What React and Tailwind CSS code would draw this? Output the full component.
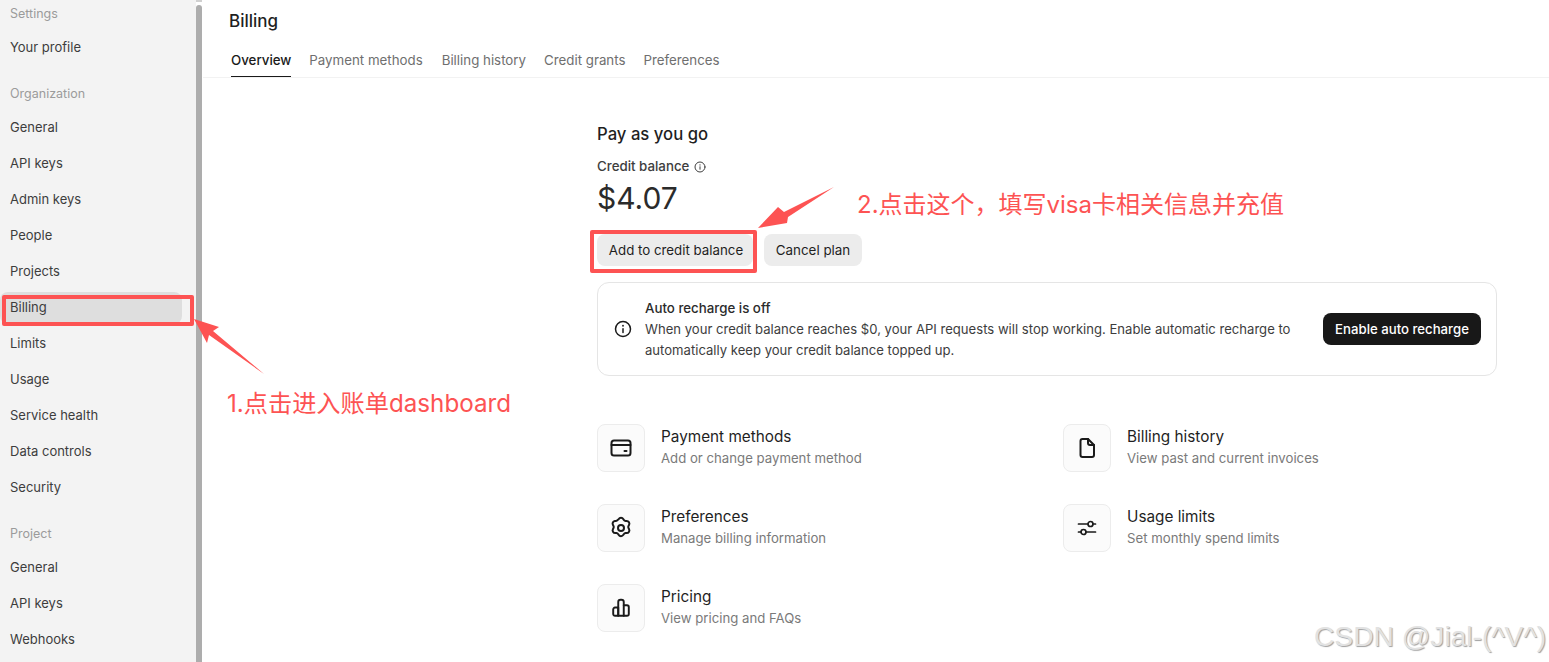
const F = "font-['Inter','Noto_Sans_CJK_SC',sans-serif]";

function NavLabel({ children, className = "" }) {
  return <div className={`h-[26px] flex items-center pl-[10px] text-[12.5px] text-[#9b9b9b] ${className}`}>{children}</div>;
}
function NavItem({ children, active }) {
  return (
    <div className={`h-[32px] mb-[4px] w-[182px] flex items-center pl-[10px] text-[13px] text-[#3d3d3d] rounded-lg ${active ? "bg-[#dedede]" : ""}`}>
      {children}
    </div>
  );
}
function Sidebar() {
  return (
    <aside className="w-[196px] h-[662px] shrink-0 bg-[#f3f3f3] overflow-hidden">
      <div className="h-[1px]" />
      <NavLabel>Settings</NavLabel>
      <div className="h-[2px]" />
      <div className="mt-[3px]"><NavItem>Your profile</NavItem></div>
      <div className="h-[13px]" />
      <NavLabel>Organization</NavLabel>
      <div className="mt-[5px]">
        {["General", "API keys", "Admin keys", "People", "Projects"].map((t) => <NavItem key={t}>{t}</NavItem>)}
        <NavItem active>Billing</NavItem>
        {["Limits", "Usage", "Service health", "Data controls", "Security"].map((t) => <NavItem key={t}>{t}</NavItem>)}
      </div>
      <div className="h-[13px]" />
      <NavLabel>Project</NavLabel>
      <div className="mt-[5px]">
        {["General", "API keys", "Webhooks"].map((t) => <NavItem key={t + "p"}>{t}</NavItem>)}
      </div>
    </aside>
  );
}
function Scrollbar() {
  return (
    <div className="w-[7px] shrink-0 h-[662px] bg-white flex flex-col">
      <div className="w-[6px] h-[2px] bg-[#d0d0d0]" />
      <div className="w-[6px] mt-[3px] flex-1 bg-[#adadad] rounded-t-[3px]" />
    </div>
  );
}
const tabs = [
  ["Overview", "ml-[28px]"],
  ["Payment methods", "ml-[18px]"],
  ["Billing history", "ml-[19px]"],
  ["Credit grants", "ml-[18px]"],
  ["Preferences", "ml-[18px]"],
];
const I = ({ children, size = 24, sw = 2 }) => (
  <svg width={size} height={size} viewBox="0 0 24 24" fill="none" stroke="#1a1a1a" strokeWidth={sw} strokeLinecap="round" strokeLinejoin="round">{children}</svg>
);
const CardIcon = () => (
  <I>
    <rect x="2.5" y="4.5" width="19" height="15" rx="2.5" />
    <path d="M2.5 9h19" />
    <path d="M15.5 15h2" />
  </I>
);
const DocIcon = () => (
  <I>
    <path d="M5.5 5a2 2 0 0 1 2-2h5.5l6 6V19a2 2 0 0 1-2 2H7.5a2 2 0 0 1-2-2z" />
    <path d="M13 3v4a2 2 0 0 0 2 2h4" />
  </I>
);
const GearIcon = () => (
  <I>
    <path d="M9.6 3.2a2.8 2.8 0 0 1 4.8 0l.5.8a2 2 0 0 0 1.7 1l1-.1a2.8 2.8 0 0 1 2.4 4.2l-.5.9a2 2 0 0 0 0 2l.5.9a2.8 2.8 0 0 1-2.4 4.2l-1-.1a2 2 0 0 0-1.7 1l-.5.8a2.8 2.8 0 0 1-4.8 0l-.5-.8a2 2 0 0 0-1.7-1l-1 .1a2.8 2.8 0 0 1-2.4-4.2l.5-.9a2 2 0 0 0 0-2l-.5-.9A2.8 2.8 0 0 1 5.9 4.9l1 .1a2 2 0 0 0 1.7-1z" />
    <circle cx="12" cy="12" r="3" />
  </I>
);
const SliderIcon = () => (
  <I sw={1.7}>
    <path d="M3.5 8h9.5M18 8h2.5" />
    <circle cx="15.5" cy="8" r="2.5" />
    <path d="M3.5 16h2.5M11 16h9.5" />
    <circle cx="8.5" cy="16" r="2.5" />
  </I>
);
const BarsIcon = () => (
  <I size={22} sw={2.1}>
    <path d="M3.5 18.5v-5A2 2 0 0 1 5.5 11.5H9V20.5H5.5a2 2 0 0 1-2-2z" />
    <path d="M9 20.5V5.5A2.5 2.5 0 0 1 11.5 3h1A2.5 2.5 0 0 1 15 5.5V20.5z" />
    <path d="M15 9h3.5a2 2 0 0 1 2 2v7.5a2 2 0 0 1-2 2H15" />
  </I>
);
const InfoIcon = ({ size, sw = 2, color = "#1a1a1a" }) => (
  <svg width={size} height={size} viewBox="0 0 24 24" fill="none" stroke={color} strokeWidth={sw} strokeLinecap="round">
    <circle cx="12" cy="12" r="10" />
    <path d="M12 11.5v5" />
    <path d="M12 7.6v.2" strokeWidth={sw * 1.2} />
  </svg>
);
function Link({ icon, title, sub }) {
  return (
    <div className="flex h-[48px] mb-[32px]">
      <div className="w-[48px] h-[48px] shrink-0 rounded-lg border border-[#ececec] bg-[#fbfbfb] flex items-center justify-center">{icon}</div>
      <div className="ml-[16px] flex flex-col">
        <div className="text-[15.3px] leading-[24px] text-[#1f1f1f] mt-[1px]">{title}</div>
        <div className="text-[13.2px] leading-[20px] text-[#7a7a7a] -mt-[1px]">{sub}</div>
      </div>
    </div>
  );
}
function Main() {
  return (
    <main className="flex-1 min-w-0 h-[662px] overflow-hidden bg-white">
      <div className="h-[78px] border-b border-[#f2f2f2] flex flex-col">
        <div className="h-[43px] pl-[26px] flex items-center text-[17px] font-medium text-[#1f1f1f]">Billing</div>
        <div className="flex h-[34px]">
          {tabs.map(([t, m], i) => (
            <div key={t} className={`${m} h-[34px] flex items-center pt-[2px] text-[13.3px] ${i === 0 ? "font-medium text-[#1a1a1a] border-b border-[#1a1a1a]" : "text-[#6f6f6f]"}`}>{t}</div>
          ))}
        </div>
      </div>
      <div className="pl-[394px] w-[1294px]">
        <h2 className="mt-[45px] text-[16.7px] leading-[22px] font-medium text-[#1f1f1f]">Pay as you go</h2>
        <div className="mt-[12px] h-[20px] flex items-center gap-[5px] text-[13.3px] font-medium text-[#3d3d3d]">
          Credit balance <InfoIcon size={12} sw={2} color="#3d3d3d" />
        </div>
        <div className="mt-[1px] text-[30px] leading-[40px] text-[#2b2b2b]">$4.07</div>
        <div className="mt-[16px] flex gap-[11px]">
          <button className="w-[156px] pl-[2px] pt-[1px] h-[32px] rounded-lg bg-[#ececec] text-[13.3px] text-[#1f1f1f]">Add to credit balance</button>
          <button className="w-[98px] h-[32px] rounded-lg bg-[#ececec] text-[13.4px] text-[#1f1f1f]">Cancel plan</button>
        </div>
        <div className="mt-[16px] w-[900px] h-[94px] rounded-xl border border-[#e5e5e5] flex items-center pl-[16px] pr-[15px]">
          <InfoIcon size={18} sw={2} />
          <div className="ml-[13px] w-[665px]">
            <div className="text-[13.3px] leading-[21px] font-medium text-[#2b2b2b]">Auto recharge is off</div>
            <div className="text-[13.1px] leading-[21px] text-[#3d3d3d]">When your credit balance reaches $0, your API requests will stop working. Enable automatic recharge to automatically keep your credit balance topped up.</div>
          </div>
          <button className="ml-auto w-[158px] h-[32px] pt-[1px] rounded-lg bg-[#181818] text-white text-[13.2px] font-medium">Enable auto recharge</button>
        </div>
        <div className="mt-[48px] w-[900px] grid grid-cols-2 gap-x-[32px]">
          <Link icon={<CardIcon />} title="Payment methods" sub="Add or change payment method" />
          <Link icon={<DocIcon />} title="Billing history" sub="View past and current invoices" />
          <Link icon={<GearIcon />} title="Preferences" sub="Manage billing information" />
          <Link icon={<SliderIcon />} title="Usage limits" sub="Set monthly spend limits" />
          <Link icon={<BarsIcon />} title="Pricing" sub="View pricing and FAQs" />
        </div>
      </div>
    </main>
  );
}
function Annotations() {
  const red = "#fd5353";
  return (
    <>
      <div className="absolute left-[2px] top-[295px] w-[192px] h-[31px] border-[4px] border-[#fd5353] rounded-[2px]" />
      <div className="absolute left-[590px] top-[230px] w-[167px] h-[43px] border-[4px] border-[#fd5353] rounded-[2px]" />
      <svg className="absolute left-0 top-0 pointer-events-none" width="1549" height="662">
        <polygon fill={red} points="194,319 219,327 213,331 264,374 209,335 207,343" />
        <polygon fill={red} points="758,228 778,207 784,212 834,187 788,217 787,223" />
      </svg>
      <div className="absolute left-[227px] top-[387px] text-[24.2px] leading-[34px] text-[#fd5353] whitespace-nowrap">1.点击进入账单dashboard</div>
      <div className="absolute left-[857px] top-[188px] text-[24px] leading-[34px] text-[#fd5353] whitespace-nowrap">{"2.点击这个\uFF0C填写visa卡相关信息并充值"}</div>
      <div className="absolute left-[1314px] top-[619px] text-[28.2px] leading-[34px] text-[#e2e2e2] whitespace-nowrap font-['Liberation_Sans',sans-serif] [text-shadow:1px_1px_1px_#a0a0a0]">CSDN @Jial-(^V^)</div>
    </>
  );
}
export default function App() {
  return (
    <div className={`relative flex w-[1549px] h-[662px] overflow-hidden bg-white ${F}`}>
      <Sidebar />
      <Scrollbar />
      <Main />
      <Annotations />
    </div>
  );
}
